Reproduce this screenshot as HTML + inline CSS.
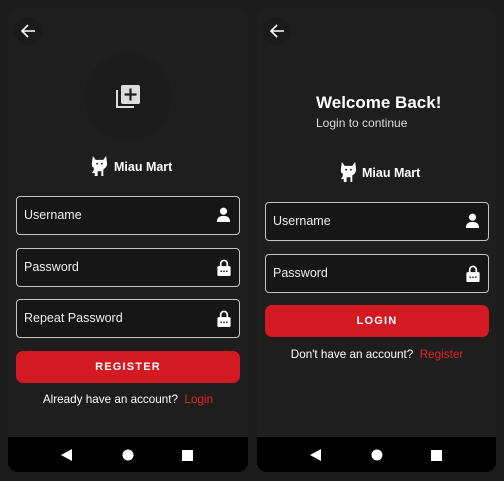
<!DOCTYPE html>
<html><head><style>
*{margin:0;padding:0;box-sizing:border-box}
body{width:504px;height:481px;background:#1c1c1c;font-family:"Liberation Sans",sans-serif;color:#fff;position:relative;overflow:hidden}
.p{position:absolute;top:8px;width:240px;height:464px;background:#1e1e1e;border-radius:10px;overflow:hidden}
.a{position:absolute}
.back{width:28px;height:28px;border-radius:50%;background:#1a1a1a;left:6px;top:9px}
.in{position:absolute;left:8px;width:224px;height:39px;border:1.5px solid #c4c4c4;border-radius:4px;background:#161616;font-size:12.5px;padding-left:7px;line-height:36px;color:#eee}
.in svg{position:absolute;right:8px;top:10px}
.btn{position:absolute;left:8px;width:224px;height:32px;background:#d31a22;border-radius:7px;text-align:center;line-height:32px;font-size:11px;font-weight:bold;letter-spacing:1.2px}
.t{position:absolute;left:0;width:240px;text-align:center;font-size:11.7px}
.t b{color:#e3222a;font-weight:normal}
.nav{position:absolute;left:0;bottom:0;width:240px;height:35px;background:#000}
.logo{position:absolute;font-size:12.5px;font-weight:bold}
</style></head><body>
<svg width="0" height="0" style="position:absolute"><defs>
<symbol id="cat" viewBox="0 0 20 24"><path fill="#fff" d="M3 1l3 4h8l3-4 1 8c0 3-2 5-4 6v7h-2v-5h-4v5H5v-3H2l2-3v-3C2 13 2 11 2 9z"/><circle cx="7.5" cy="9" r="1" fill="#1e1e1e"/><circle cx="12.5" cy="9" r="1" fill="#1e1e1e"/></symbol>
<symbol id="user" viewBox="0 0 16 16"><circle cx="8" cy="4.5" r="3.8" fill="#fff"/><path fill="#fff" d="M1 16c0-5 3-6.5 7-6.5s7 1.5 7 6.5z"/></symbol>
<symbol id="lock" viewBox="0 0 14 18"><path d="M3.5 8V5a3.5 3.5 0 017 0v3" stroke="#fff" stroke-width="1.8" fill="none"/><rect x="0" y="7.5" width="14" height="10.5" rx="1.5" fill="#fff"/><circle cx="4" cy="13" r=".9" fill="#1e1e1e"/><circle cx="7" cy="13" r=".9" fill="#1e1e1e"/><circle cx="10" cy="13" r=".9" fill="#1e1e1e"/></symbol>
<symbol id="arr" viewBox="0 0 16 16"><path d="M15 8H2M8 2L2 8l6 6" stroke="#fff" stroke-width="1.6" fill="none"/></symbol>
<symbol id="nav" viewBox="0 0 240 35"><path d="M53 18l11-6v12z" fill="#fff"/><circle cx="120" cy="18" r="5.5" fill="#fff"/><rect x="174" y="13" width="11" height="11" fill="#fff"/></symbol>
</defs></svg>

<div class="p" style="left:8px">
 <div class="a back"><svg width="16" height="16" style="margin:6px"><use href="#arr"/></svg></div>
 <div class="a" style="left:76px;top:45px;width:88px;height:88px;border-radius:50%;background:#1c1c1c"></div>
 <svg class="a" style="left:107px;top:76px" width="26" height="26" viewBox="0 0 26 26"><path d="M2 6v17h17" stroke="#ddd" stroke-width="2" fill="none"/><rect x="6" y="1" width="19" height="19" rx="2" fill="#ddd"/><path d="M15.5 4.5v12M9.5 10.5h12" stroke="#1e1e1e" stroke-width="2.2"/></svg>
 <svg class="a" style="left:82px;top:147px" width="19" height="23"><use href="#cat"/></svg>
 <div class="logo" style="left:106px;top:152px">Miau Mart</div>
 <div class="in" style="top:188px">Username<svg width="15" height="15"><use href="#user"/></svg></div>
 <div class="in" style="top:240px">Password<svg width="14" height="17" style="top:10px"><use href="#lock"/></svg></div>
 <div class="in" style="top:291px">Repeat Password<svg width="14" height="17" style="top:10px"><use href="#lock"/></svg></div>
 <div class="btn" style="top:343px">REGISTER</div>
 <div class="t" style="top:385px">Already have an account?&nbsp; <b>Login</b></div>
 <div class="nav"><svg width="240" height="35"><use href="#nav"/></svg></div>
</div>

<div class="p" style="left:257px;width:239px">
 <div class="a back"><svg width="16" height="16" style="margin:6px"><use href="#arr"/></svg></div>
 <div class="a" style="left:59px;top:85px;font-size:17px;font-weight:bold">Welcome Back!</div>
 <div class="a" style="left:59px;top:108px;font-size:12px;color:#ddd">Login to continue</div>
 <svg class="a" style="left:82px;top:153px" width="19" height="23"><use href="#cat"/></svg>
 <div class="logo" style="left:105px;top:158px">Miau Mart</div>
 <div class="in" style="top:194px">Username<svg width="15" height="15"><use href="#user"/></svg></div>
 <div class="in" style="top:246px">Password<svg width="14" height="17" style="top:10px"><use href="#lock"/></svg></div>
 <div class="btn" style="top:297px">LOGIN</div>
 <div class="t" style="top:340px">Don't have an account?&nbsp; <b>Register</b></div>
 <div class="nav"><svg width="240" height="35"><use href="#nav"/></svg></div>
</div>
</body></html>
